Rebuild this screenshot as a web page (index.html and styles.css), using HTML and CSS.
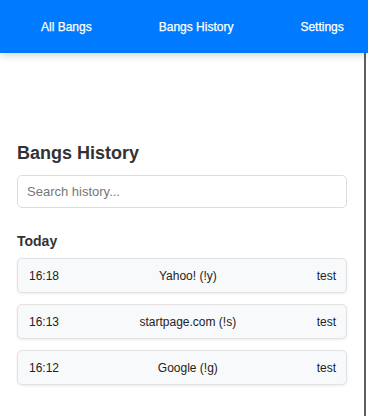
FILE: index.html
```html
<!DOCTYPE html>
<html>
<head>
<meta charset="utf-8">
<link rel="stylesheet" href="styles.css">
</head>
<body>
<header class="topbar">
  <nav class="nav">
    <a class="nav-link">All Bangs</a>
    <a class="nav-link">Bangs History</a>
    <a class="nav-link">Settings</a>
  </nav>
</header>
<main class="page">
  <h2 class="title">Bangs History</h2>
  <input class="search" type="text" placeholder="Search history...">
  <h3 class="day">Today</h3>
  <div class="list">
    <div class="item"><span class="time">16:18</span><span class="bang">Yahoo! (!y)</span><span class="query">test</span></div>
    <div class="item"><span class="time">16:13</span><span class="bang">startpage.com (!s)</span><span class="query">test</span></div>
    <div class="item"><span class="time">16:12</span><span class="bang">Google (!g)</span><span class="query">test</span></div>
  </div>
</main>
</body>
</html>
```
FILE: styles.css
```css
* { box-sizing: border-box; }
html, body { margin: 0; padding: 0; background: #fff; }
body {
  font-family: "Liberation Sans", Arial, sans-serif;
  color: #333;
  width: 368px;
  height: 416px;
  overflow: hidden;
}
.topbar {
  position: relative;
  z-index: 1;
  height: 53px;
  background: #007bff;
  box-shadow: 0 2px 8px rgba(0, 0, 0, 0.18);
}
.nav {
  display: flex;
  align-items: center;
  height: 100%;
  padding-left: 41px;
  gap: 67px;
}
.nav-link {
  color: #fff;
  font-size: 12px;
  text-decoration: none;
  -webkit-text-stroke: 0.25px #fff;
}
.page {
  width: 366px;
  height: 363px;
  border-right: 2px solid #5f5f5f;
  padding: 89px 19px 0 17px;
}
.title {
  margin: 0;
  font-size: 18px;
  line-height: 22px;
  font-weight: bold;
  color: #333;
}
.search {
  display: block;
  width: 330px;
  height: 33px;
  margin-top: 11px;
  padding: 0 9px;
  border: 1px solid #ddd;
  border-radius: 5px;
  font-family: inherit;
  font-size: 13px;
  color: #333;
  outline: none;
}
.search::placeholder { color: #777; }
.day {
  margin: 25px 0 0;
  font-size: 14px;
  line-height: 16px;
  font-weight: bold;
  color: #333;
}
.list {
  display: flex;
  flex-direction: column;
  gap: 11px;
  margin-top: 9px;
}
.item {
  display: flex;
  justify-content: space-between;
  align-items: center;
  width: 330px;
  height: 35px;
  padding: 0 10px 0 11px;
  background: #f8f9fa;
  border: 1px solid #e2e2e2;
  border-radius: 5px;
  box-shadow: 0 1px 3px rgba(0, 0, 0, 0.08);
  font-size: 12px;
  color: #222;
}
```
